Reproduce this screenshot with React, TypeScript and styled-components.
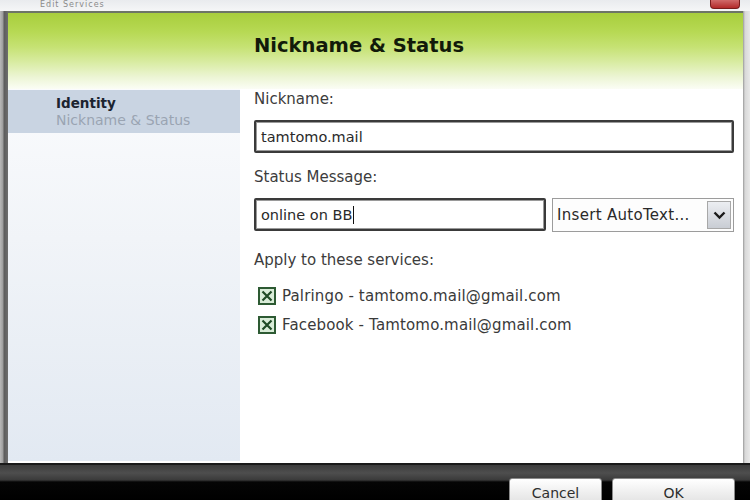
import React from "react";
import styled, { createGlobalStyle } from "styled-components";

const Global = createGlobalStyle`
  html, body { margin: 0; padding: 0; background: #ffffff; }
  body { font-family: "DejaVu Sans", Verdana, sans-serif; }
`;

const Window = styled.div`
  width: 750px;
  height: 500px;
  overflow: hidden;
  display: flex;
  flex-direction: column;
  background: #f4f4f4;
`;

const TitleStrip = styled.div`
  height: 11px;
  flex: none;
  display: flex;
  align-items: flex-start;
  justify-content: space-between;
  padding: 0 10px 0 40px;
  box-sizing: border-box;
  background: linear-gradient(#e9ebee, #f5f6f7);
  overflow: hidden;
`;

const TitleText = styled.span`
  font-size: 8px;
  line-height: 10px;
  color: #8a8a8a;
  letter-spacing: 1px;
`;

const CloseButton = styled.div`
  width: 28px;
  height: 8px;
  border-radius: 0 0 4px 4px;
  background: linear-gradient(#d06a6a, #b32a2a);
  border: 1px solid #7a1c1c;
  border-top: none;
`;

const Body = styled.div`
  flex: 1;
  display: flex;
  min-height: 0;
`;

const LeftEdge = styled.div`
  width: 8px;
  flex: none;
  background: linear-gradient(90deg, #b9b9b9 0, #9c9c9c 3px, #5c5c5c 4px, #6e6e6e 8px);
`;

const RightEdge = styled.div`
  width: 7px;
  flex: none;
  background: linear-gradient(90deg, #9a9a9a 0, #d8d8d8 2px, #e8e8e8 7px);
`;

const Main = styled.div`
  flex: 1;
  display: flex;
  flex-direction: column;
  min-width: 0;
  border-top: 2px solid #6d7566;
`;

const Header = styled.div`
  height: 76px;
  flex: none;
  display: flex;
  align-items: flex-start;
  padding: 21px 0 0 246px;
  box-sizing: border-box;
  background: linear-gradient(#a8ce3c 0%, #b7d954 25%, #c6e274 45%, #d9eca3 65%, #ecf5d4 84%, #fbfdf5 100%);
`;

const HeaderTitle = styled.h1`
  margin: 0;
  font-family: "DejaVu Sans", Verdana, sans-serif;
  font-size: 19.5px;
  font-weight: bold;
  color: #121a0a;
`;

const Content = styled.div`
  flex: 1;
  display: flex;
  min-height: 0;
  background: #ffffff;
  border-bottom: 2px solid #ffffff;
`;

const Sidebar = styled.div`
  width: 232px;
  flex: none;
  padding-top: 1px;
  background: linear-gradient(#fafbfd, #f1f4f8 40%, #e2e9f2);
`;

const NavItem = styled.div<{ $active?: boolean }>`
  height: 43px;
  display: flex;
  flex-direction: column;
  justify-content: center;
  padding-left: 48px;
  background: ${(p) => (p.$active ? "#c9d4e2" : "transparent")};
`;

const NavTitle = styled.span`
  font-size: 13.5px;
  font-weight: bold;
  color: #1c2430;
  line-height: 17px;
`;

const NavSub = styled.span`
  font-size: 14px;
  color: #9aa4b2;
  line-height: 17px;
`;

const Form = styled.div`
  flex: 1;
  padding: 0 9px 0 14px;
  display: flex;
  flex-direction: column;
`;

const Label = styled.div<{ $top: number }>`
  margin-top: ${(p) => p.$top}px;
  font-size: 15px;
  line-height: 18px;
  color: #3c3c3c;
`;

const Row = styled.div`
  display: flex;
  gap: 6px;
  margin-top: 12px;
`;

const TextBox = styled.div<{ $width?: number }>`
  ${(p) => (p.$width ? `width: ${p.$width}px; flex: none;` : "flex: 1;")}
  height: 33px;
  box-sizing: border-box;
  border: 2px solid #3a3a3a;
  border-radius: 2px;
  box-shadow: inset 0 0 0 1px #9a9a9a;
  display: flex;
  align-items: center;
  padding-left: 5px;
  font-size: 14.5px;
  color: #2a2a2a;
  background: #fff;
`;

const Caret = styled.span`
  display: inline-block;
  width: 1px;
  height: 18px;
  background: #111;
  margin-left: 1px;
`;

const Select = styled.div`
  flex: 1;
  height: 34px;
  box-sizing: border-box;
  border: 1px solid #9c9c9c;
  display: flex;
  align-items: center;
  justify-content: space-between;
  padding: 2px 2px 2px 4px;
  font-size: 15px;
  letter-spacing: 0.3px;
  color: #2a2a2a;
  background: #fdfdfd;
  white-space: nowrap;
`;

const DropButton = styled.div`
  width: 24px;
  height: 28px;
  flex: none;
  box-sizing: border-box;
  border: 1px solid #a8a8a8;
  background: linear-gradient(#eceef2, #c9cdd4);
  display: flex;
  align-items: center;
  justify-content: center;
`;

const CheckRow = styled.div<{ $top: number }>`
  display: flex;
  align-items: center;
  gap: 6px;
  margin-top: ${(p) => p.$top}px;
  padding-left: 4px;
  font-size: 15px;
  letter-spacing: 0.15px;
  color: #3a3a3a;
  line-height: 18px;
`;

const CheckBox = styled.div`
  width: 18px;
  height: 18px;
  flex: none;
  box-sizing: border-box;
  border: 2px solid #2d5a33;
  background: #d9ecd8;
  display: flex;
  align-items: center;
  justify-content: center;
`;

const Footer = styled.div`
  height: 37px;
  flex: none;
  display: flex;
  justify-content: flex-end;
  align-items: flex-start;
  gap: 10px;
  padding: 13px 15px 0 0;
  box-sizing: border-box;
  border-top: 2px solid #1a1a1a;
  background: linear-gradient(#3c3c3c 0, #4e4e4e 8px, #3a3a3a 15px, #050505 17px, #000 100%);
`;

const FooterButton = styled.button<{ $w: number }>`
  width: ${(p) => p.$w}px;
  height: 30px;
  flex: none;
  border: 1px solid #8a8a8a;
  border-radius: 3px;
  background: linear-gradient(#ffffff, #eeeeee 50%, #dedede);
  font-family: "DejaVu Sans", Verdana, sans-serif;
  font-size: 14px;
  line-height: 14px;
  color: #2e2e2e;
  padding: 7px 0 0;
  display: flex;
  justify-content: center;
  align-items: flex-start;
`;

const Chevron = () => (
  <svg width="13" height="9" viewBox="0 0 13 9">
    <path d="M1.5 1.5 L6.5 6.5 L11.5 1.5" fill="none" stroke="#1a1a1a" strokeWidth="2.4" />
  </svg>
);

const XMark = () => (
  <svg width="12" height="12" viewBox="0 0 12 12">
    <path d="M1.5 1.5 L10.5 10.5 M10.5 1.5 L1.5 10.5" stroke="#1f4a25" strokeWidth="2.2" />
  </svg>
);

const services = [
  "Palringo - tamtomo.mail@gmail.com",
  "Facebook - Tamtomo.mail@gmail.com",
];

export default function App() {
  return (
    <Window>
      <Global />
      <TitleStrip>
        <TitleText>Edit Services</TitleText>
        <CloseButton />
      </TitleStrip>
      <Body>
        <LeftEdge />
        <Main>
          <Header>
            <HeaderTitle>Nickname &amp; Status</HeaderTitle>
          </Header>
          <Content>
            <Sidebar>
              <NavItem $active>
                <NavTitle>Identity</NavTitle>
                <NavSub>Nickname &amp; Status</NavSub>
              </NavItem>
            </Sidebar>
            <Form>
              <Label $top={1}>Nickname:</Label>
              <Row>
                <TextBox>tamtomo.mail</TextBox>
              </Row>
              <Label $top={15}>Status Message:</Label>
              <Row>
                <TextBox $width={292}>
                  online on BB<Caret />
                </TextBox>
                <Select>
                  <span>Insert AutoText...</span>
                  <DropButton>
                    <Chevron />
                  </DropButton>
                </Select>
              </Row>
              <Label $top={19}>Apply to these services:</Label>
              {services.map((s, i) => (
                <CheckRow key={s} $top={i === 0 ? 18 : 11}>
                  <CheckBox>
                    <XMark />
                  </CheckBox>
                  <span>{s}</span>
                </CheckRow>
              ))}
            </Form>
          </Content>
        </Main>
        <RightEdge />
      </Body>
      <Footer>
        <FooterButton $w={93}>Cancel</FooterButton>
        <FooterButton $w={123}>OK</FooterButton>
      </Footer>
    </Window>
  );
}
